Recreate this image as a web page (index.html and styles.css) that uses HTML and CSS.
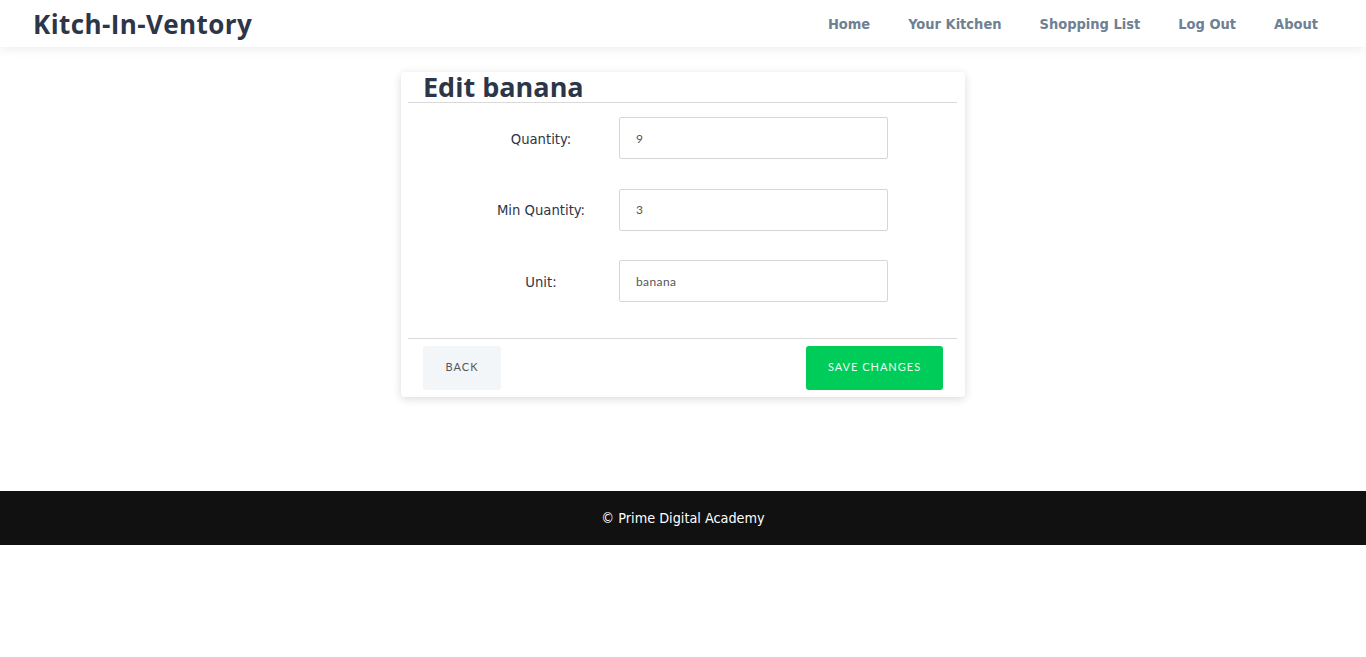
FILE: index.html
```html
<!DOCTYPE html>
<html lang="en">
<head>
<meta charset="utf-8">
<title>Kitch-In-Ventory</title>
<link rel="stylesheet" href="styles.css">
</head>
<body>
<header class="nav">
  <div class="logo">Kitch-In-Ventory</div>
  <nav class="links">
    <a class="link" href="#">Home</a>
    <a class="link" href="#">Your Kitchen</a>
    <a class="link" href="#">Shopping List</a>
    <a class="link" href="#">Log Out</a>
    <a class="link" href="#">About</a>
  </nav>
</header>
<main class="main">
  <section class="card">
    <h2 class="title">Edit banana</h2>
    <div class="rows">
      <div class="row"><label class="label">Quantity:</label><input class="input" value="9"></div>
      <div class="row"><label class="label">Min Quantity:</label><input class="input" value="3"></div>
      <div class="row"><label class="label">Unit:</label><input class="input" value="banana"></div>
    </div>
    <div class="actions">
      <button class="btn back">BACK</button>
      <button class="btn save">SAVE CHANGES</button>
    </div>
  </section>
</main>
<footer class="footer">© Prime Digital Academy</footer>
</body>
</html>
```
FILE: styles.css
```css
* { box-sizing: border-box; }
body { margin: 0; background: #fff; font-family: "DejaVu Sans Condensed", "DejaVu Sans", sans-serif; }
.nav {
  height: 47px;
  display: flex;
  align-items: center;
  justify-content: space-between;
  padding: 0 29px 0 33px;
  background: #fff;
  box-shadow: 0 2px 10px rgba(0,0,0,0.08);
  position: relative;
}
.logo {
  font-family: "Open Sans", sans-serif;
  font-weight: 700;
  font-size: 26px;
  color: #2c3648;
  letter-spacing: 0.4px;
}
.links { display: flex; }
.link {
  font-weight: 700;
  font-size: 14.5px;
  color: #6e8094;
  text-decoration: none;
  padding: 0 19px;
}
.main { display: flex; justify-content: center; padding-top: 25px; height: 444px; }
.card {
  width: 564px;
  height: 325px;
  background: #fff;
  border-radius: 4px;
  box-shadow: 0 2px 8px rgba(0,0,0,0.15);
  padding: 0 8px 0 7px;
}
.title {
  margin: 0;
  padding-left: 15px;
  font-family: "Open Sans", sans-serif;
  font-weight: 700;
  font-size: 27px;
  line-height: 30px;
  color: #2c3648;
  border-bottom: 1px solid #d9d9d9;
}
.rows {
  display: flex;
  flex-direction: column;
  gap: 29.5px;
  padding: 14px 0 36px;
  border-bottom: 1px solid #d9d9d9;
}
.row { display: flex; align-items: center; padding-left: 55px; }
.label {
  width: 156px;
  text-align: center;
  font-size: 14.7px;
  color: #2c3648;
}
.input {
  width: 269px;
  height: 42px;
  border: 1px solid #d6d6d6;
  border-radius: 2px;
  padding: 0 16px;
  font-family: "Lato", sans-serif;
  font-size: 12px;
  color: #555;
  letter-spacing: 0.4px;
}
.actions {
  display: flex;
  justify-content: space-between;
  padding: 7px 14px 0 15px;
}
.btn {
  height: 44px;
  border: none;
  border-radius: 3px;
  padding: 0 0 3px;
  font-family: "Lato", sans-serif;
  font-size: 11px;
  letter-spacing: 1px;
}
.back { width: 78px; background: #f3f6f9; color: #555; }
.save { width: 137px; background: #00cc5a; color: #e8fff0; }
.footer {
  height: 54px;
  background: #111;
  color: #fff;
  display: flex;
  align-items: center;
  justify-content: center;
  font-size: 14.3px;
}
```
